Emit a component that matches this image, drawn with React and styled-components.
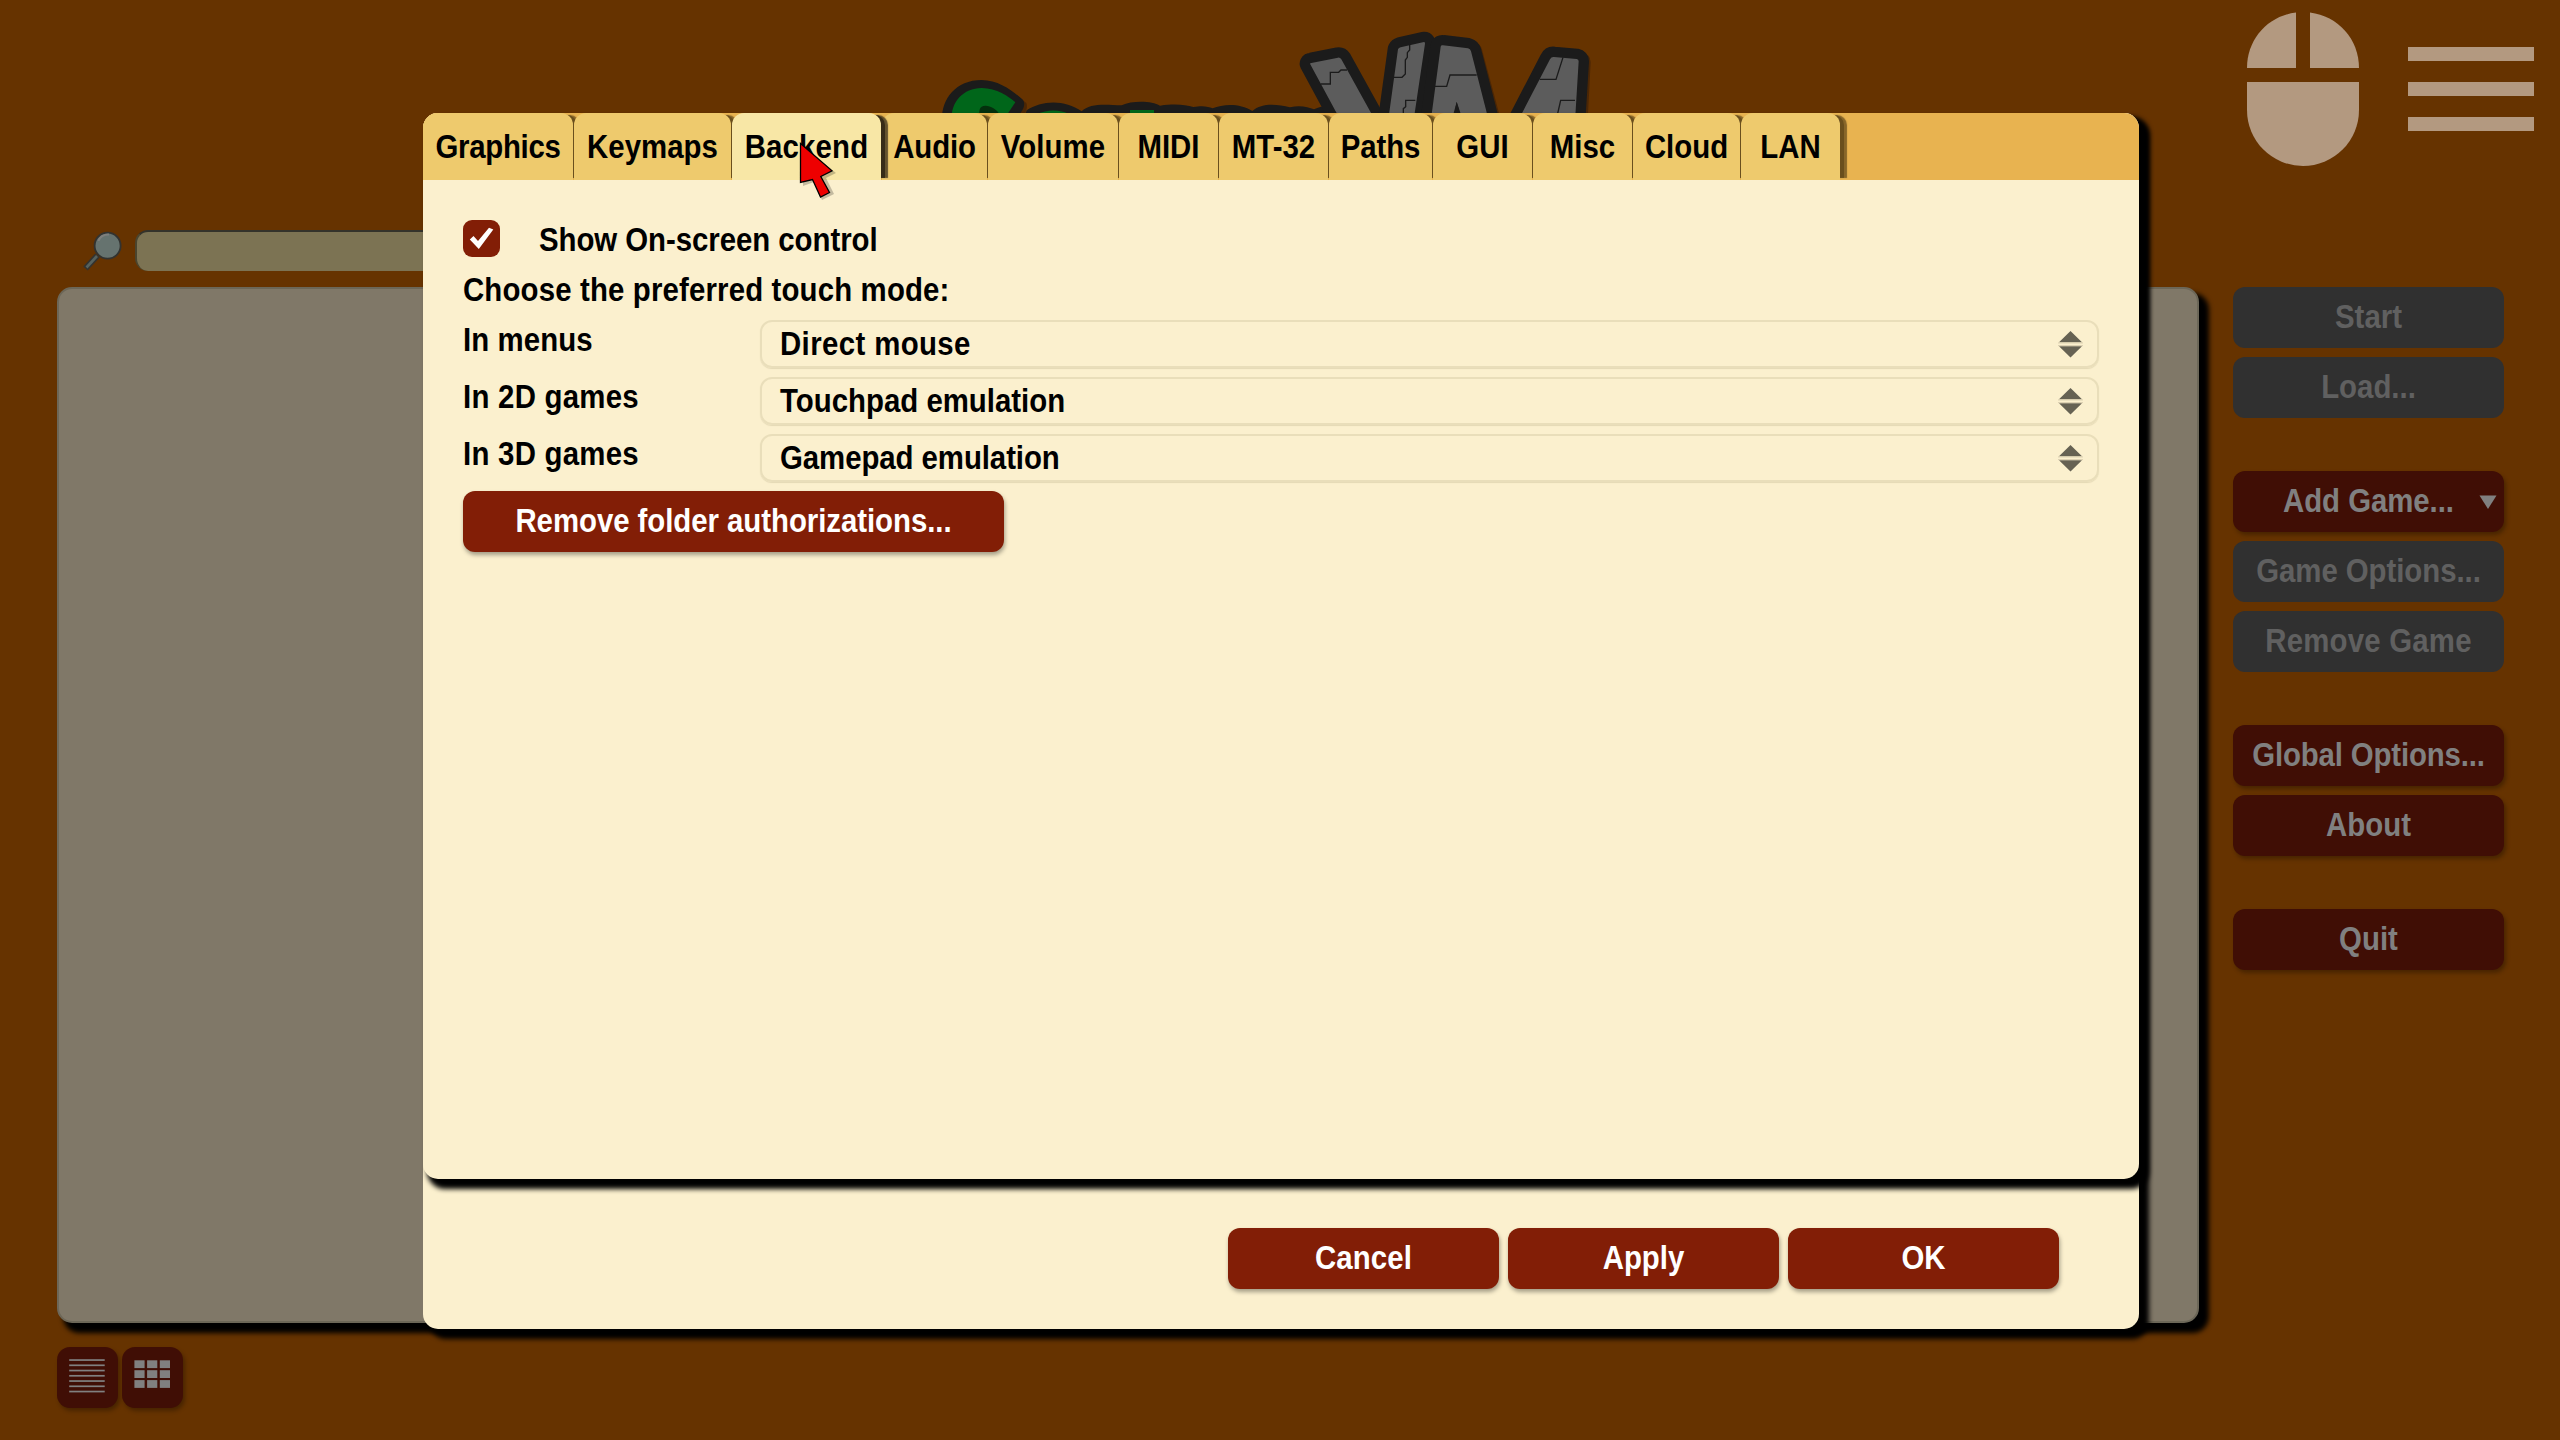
import React from "react";
import styled, { createGlobalStyle, css } from "styled-components";

const GlobalStyle = createGlobalStyle`
  * { box-sizing: border-box; }
  html, body { margin: 0; padding: 0; background: #663300; overflow: hidden; }
  body { font-family: "Liberation Sans", Arial, sans-serif; font-weight: 700; }
`;

const Screen = styled.div`
  position: relative;
  width: 2560px;
  height: 1440px;
  background: #663300;
  overflow: hidden;
`;

/* The interface face is a tall, slightly condensed grotesque. */
const Text = styled.span`
  display: inline-block;
  font-size: 29.4px;
  line-height: 40px;
  white-space: pre;
  letter-spacing: ${(p) => p.$track || 0}px;
  transform: translateY(0.7px) scaleY(1.137);
  transform-origin: 0 30.2px;
`;

/* ---------- launcher behind the dialog ---------- */

const Launcher = styled.div`
  display: flex;
  flex-direction: column;
  height: 100%;
  padding: 20px 56px 0 57px;
`;

const Header = styled.header`
  height: 210px;
  padding-left: 873px;
`;

const SearchRow = styled.div`
  display: flex;
  gap: 13px;
  height: 57px;
  padding-left: 25px;
`;

const SearchField = styled.div`
  width: 1200px;
  height: 41px;
  border: 2px solid #4a452f;
  border-top-color: #34332b;
  border-bottom: 0;
  border-radius: 13px;
  background: #7c7353;
`;

const Main = styled.div`
  display: flex;
  gap: 34px;
`;

const GameList = styled.div`
  width: 2142px;
  height: 1036px;
  border: 2px solid #6c6758;
  border-radius: 15px;
  background: #807868;
  box-shadow: 8px 8px 5px 1.5px #000;
`;

const Sidebar = styled.div`
  display: flex;
  flex-direction: column;
  gap: 53px;
`;

const SideGroup = styled.div`
  display: flex;
  flex-direction: column;
  gap: 9px;
`;

const variants = {
  disabled: css`background: #303030; color: #606060;`,
  dimmed: css`background: #400e05; color: #808080; box-shadow: 2px 3px 4px rgba(0, 0, 0, 0.3);`,
  primary: css`background: #821e06; color: #fff; box-shadow: 1px 3px 4px rgba(0, 0, 0, 0.35);`,
};

const Button = styled.button`
  position: relative;
  display: flex;
  align-items: center;
  justify-content: center;
  width: ${(p) => p.$width || 271}px;
  height: 61px;
  padding: 0 0 1px;
  border: 0;
  border-radius: 12px;
  font: inherit;
  ${(p) => variants[p.$variant]}
`;

const MenuArrow = styled.svg`
  position: absolute;
  right: 7px;
  top: 24px;
`;

const ViewSwitch = styled.div`
  display: flex;
  gap: 4px;
  margin-top: 24px;
`;

const ViewButton = styled.button`
  width: 61px;
  height: 61px;
  padding: 12px;
  border: 0;
  border-radius: 13px;
  background: #400e05;
  box-shadow: 2px 3px 4px rgba(0, 0, 0, 0.3);
  svg { display: block; }
`;

const TouchControls = styled.div`
  position: absolute;
  top: 12px;
  right: 26px;
  display: flex;
  gap: 49px;
`;

/* ---------- options dialog ---------- */

const Dialog = styled.section`
  position: absolute;
  isolation: isolate;
  left: 423px;
  top: 113px;
  width: 1716px;
  height: 1216px;
  border-radius: 15px;
  background: #fbf0ce;
  box-shadow: 8px 8px 5px 2px #000;
`;

const Pane = styled.div`
  height: 1066px;
  border-radius: 15px;
  background: #fbf0ce;
  box-shadow: 7px 7px 5px 3px #000;
`;

const TabBar = styled.nav`
  display: flex;
  gap: 1px;
  height: 67px;
  border-radius: 15px 15px 0 0;
  background: #e8b350;
  overflow: hidden;
`;

const Tab = styled.div`
  display: flex;
  align-items: center;
  justify-content: center;
  width: ${(p) => p.$width}px;
  border-radius: 12px 12px 0 0;
  color: #000;
  background: #eeca6d;
  box-shadow: 6px 0 0 -2px rgba(70, 50, 15, 0.45), 9px 0 1px -2px rgba(70, 50, 15, 0.6);
  ${(p) =>
    p.$active &&
    css`
      position: relative;
      z-index: 1;
      background: #f8e7a6;
      box-shadow: 6px 0 0 -2px rgba(40, 32, 18, 0.75), 9px 0 1px -2px rgba(40, 32, 18, 0.7);
    `}
`;

const TabContent = styled.div`
  display: flex;
  flex-direction: column;
  align-items: flex-start;
  padding: 40px 40px 0;
  color: #000;
`;

const CheckRow = styled.label`
  display: flex;
  align-items: flex-start;
  gap: 39px;
  height: 50px;
`;

const CheckBox = styled.span`
  display: flex;
  align-items: center;
  justify-content: center;
  width: 37px;
  height: 37px;
  border-radius: 9px;
  background: #821e06;
`;

const Caption = styled.div`
  height: 50px;
`;

const OptionRow = styled.div`
  display: flex;
  height: 57px;
`;

const OptionLabel = styled.div`
  width: 297px;
`;

const Select = styled.div`
  display: flex;
  align-items: center;
  justify-content: space-between;
  width: 1339px;
  height: 48px;
  padding: 0 14px 0 18px;
  border: 2px solid #e9deba;
  border-radius: 12px;
  box-shadow: 0 1px 1px #e4d9b5;
`;

const DialogActions = styled.div`
  display: flex;
  justify-content: flex-end;
  gap: 9px;
  padding: 49px 80px 0 0;
`;

const Cursor = styled.svg`
  position: absolute;
  z-index: 2;
  left: 798px;
  top: 138px;
`;

/* ---------- drawings ---------- */

const Logo = () => (
  <svg width="680" height="140" viewBox="930 20 680 140" fill="none">
    <g transform="translate(930 70) scale(0.33333)">
      <path d="M52 150C46 90 90 36 162 38C215 40 262 76 289 99C296 116 280 140 276 150Z" fill="#4b2604" />
      <path d="M36 150C34 90 75 30 155 30C208 30 252 66 277 88C286 98 284 112 272 128L268 150Z" fill="#1b1b1b" />
      <path d="M65 150C62 96 100 54 155 54C200 54 237 80 256 97L235 128L225 150Z" fill="#00661a" />
      <path d="M149 150C145 120 148 106 168 107C190 110 203 122 210 135Z" fill="#04300d" />
      <path d="M280 150L290 121C335 90 405 88 455 124C478 100 520 103 575 106C605 92 665 92 690 107C735 101 765 104 790 111C820 106 835 110 848 115C880 101 930 99 967 123C995 98 1040 102 1080 112C1112 105 1135 112 1152 118C1190 100 1235 106 1262 126L1280 150Z" fill="#1b1b1b" />
      <path d="M322 132C350 118 392 118 417 132Z" fill="#00661a" />
      <rect x="600" y="120" width="72" height="20" fill="#00661a" />
    </g>
    <g transform="translate(1270 20) scale(0.33333)" strokeLinejoin="round">
      <path d="M853 120L933 126L923 320H740Z M512 80L608 96L668 320H487Z" fill="#4b2604" stroke="#4b2604" strokeWidth="58" />
      <g fill="#5c5c5c" stroke="#1b1b1b" strokeWidth="62">
        <path d="M120 131Q121 129 124 129L204 113Q210 112 214 118L326 320H222Z" />
        <path d="M384 88Q386 84 392 82L462 66Q466 66 465 71L428 320H352Z" />
        <path d="M512 80Q513 75 519 76L594 85Q601 87 603 94L661 320H585L560 245L545 320H480Z" />
        <path d="M840 118Q844 110 852 111L920 117Q926 118 926 124L914 320H735Z" />
      </g>
      <g fill="#5c5c5c">
        <path d="M120 131Q121 129 124 129L204 113Q210 112 214 118L326 320H222Z" />
        <path d="M384 88Q386 84 392 82L462 66Q466 66 465 71L428 320H352Z" />
        <path d="M512 80Q513 75 519 76L594 85Q601 87 603 94L661 320H585L560 245L545 320H480Z" />
        <path d="M840 118Q844 110 852 111L920 117Q926 118 926 124L914 320H735Z" />
      </g>
      <path d="M560 246L548 290H573Z" fill="#1b1b1b" />
      <g stroke="#1b1b1b" strokeWidth="4" strokeLinejoin="miter">
        <path d="M152 192H181V157H206L213 150H231" />
        <path d="M372 172H396L406 162V120L412 112V98L419 90V74" />
        <path d="M436 241H407V260L400 266V290" />
        <path d="M494 199H530L540 165H620" />
        <path d="M809 178H858L879 112" />
        <path d="M915 241H872L862 285" />
      </g>
    </g>
  </svg>
);

const SearchIcon = () => (
  <svg width="40" height="41" viewBox="82 230 40 41">
    <path d="M97.5 255.5L85.500 268.500" stroke="#333330" strokeWidth="6" />
    <path d="M97 256L86.500 267.500" stroke="#56625e" strokeWidth="2.6" />
    <circle cx="107.600" cy="245.700" r="13" fill="#66736f" stroke="#333330" strokeWidth="1.800" />
    <path d="M98.500 241C100 236.500 104 234.500 109 234.500" stroke="#7f7f7c" strokeWidth="2" fill="none" />
  </svg>
);

const MouseIcon = () => (
  <svg width="112" height="154" viewBox="0 0 112 154" fill="#b39980">
    <path d="M49 0.500V56H0C0 27 21 4 49 0.500Z" />
    <path d="M63 0.500V56H112C112 27 91 4 63 0.500Z" />
    <path d="M0 70H112V98A56 56 0 0 1 0 98Z" />
  </svg>
);

const MenuIcon = () => (
  <svg width="126" height="154" viewBox="0 0 126 154" fill="#b39980">
    <rect y="35" width="126" height="14" />
    <rect y="70" width="126" height="14" />
    <rect y="105" width="126" height="14" />
  </svg>
);

const ListIcon = () => (
  <svg width="37" height="37" viewBox="0 0 37 37">
    {[0, 1, 2, 3, 4, 5, 6].map((i) => (
      <rect key={i} x="0.200" y={0.2 + i * 5.25} width="35.500" height="1.700" fill="#808080" />
    ))}
  </svg>
);

const GridIcon = () => (
  <svg width="37" height="37" viewBox="0 0 37 37">
    {[0, 1, 2].map((r) =>
      [0, 1, 2].map((c) => (
        <rect key={`${r}${c}`} x={0.4 + c * 12.7} y={1.3 + r * 9.9} width="10.200" height="7.800" fill="#808080" />
      ))
    )}
  </svg>
);

const CheckIcon = () => (
  <svg width="25" height="23" viewBox="0 0 25 23">
    <path d="M0.800 12.500L4.500 9L9 14L20 0.800L24.300 2.600L9.800 22Z" fill="#fff" />
  </svg>
);

const SpinIcon = () => (
  <svg width="25" height="27" viewBox="0 0 25 27">
    <path d="M12.500 0L24 11.300H1Z M12.500 26.500L24 15.200H1Z" fill="#666253" />
    <path d="M0 11.900H25M0 14.600H25" stroke="#d5cbab" strokeWidth="0.900" />
  </svg>
);

/* ---------- data ---------- */

const TABS = [
  ["Graphics", 150, -0.3],
  ["Keymaps", 157, 0.05],
  ["Backend", 149, 0.15],
  ["Audio", 105, -0.15],
  ["Volume", 130, 0.1],
  ["MIDI", 99, 0],
  ["MT-32", 109, 0],
  ["Paths", 103, -0.1],
  ["GUI", 99, 0],
  ["Misc", 99, 0],
  ["Cloud", 107, 0],
  ["LAN", 99, 0],
];

const SIDE = [
  [{ label: "Start", variant: "disabled" }, { label: "Load...", variant: "disabled" }],
  [
    { label: "Add Game...", variant: "dimmed", menu: true, track: -0.05 },
    { label: "Game Options...", variant: "disabled", track: -0.05 },
    { label: "Remove Game", variant: "disabled", track: 0.2 },
  ],
  [{ label: "Global Options...", variant: "dimmed", track: -0.15 }, { label: "About", variant: "dimmed" }],
  [{ label: "Quit", variant: "dimmed" }],
];

const TOUCH_MODES = [
  { label: "In menus", value: "Direct mouse", labelTrack: 0.1, valueTrack: 0.38 },
  { label: "In 2D games", value: "Touchpad emulation", labelTrack: 0.25, valueTrack: 0 },
  { label: "In 3D games", value: "Gamepad emulation", labelTrack: 0.25, valueTrack: -0.07 },
];

export default function App() {
  return (
    <Screen>
      <GlobalStyle />
      <Launcher>
        <Header><Logo /></Header>
        <SearchRow>
          <SearchIcon />
          <SearchField />
        </SearchRow>
        <Main>
          <GameList />
          <Sidebar>
            {SIDE.map((group, i) => (
              <SideGroup key={i}>
                {group.map(({ label, variant, menu, track }) => (
                  <Button key={label} $variant={variant}>
                    <Text $track={track}>{label}</Text>
                    {menu && (
                      <MenuArrow width="18" height="14" viewBox="0 0 18 14">
                        <path d="M0.500 0.500H17.500L9 14Z" fill="#808080" />
                      </MenuArrow>
                    )}
                  </Button>
                ))}
              </SideGroup>
            ))}
          </Sidebar>
        </Main>
        <ViewSwitch>
          <ViewButton><ListIcon /></ViewButton>
          <ViewButton><GridIcon /></ViewButton>
        </ViewSwitch>
      </Launcher>

      <TouchControls>
        <MouseIcon />
        <MenuIcon />
      </TouchControls>

      <Dialog>
        <Pane>
          <TabBar>
            {TABS.map(([label, width, track]) => (
              <Tab key={label} $width={width} $active={label === "Backend"}>
                <Text $track={track}>{label}</Text>
              </Tab>
            ))}
          </TabBar>
          <TabContent>
            <CheckRow>
              <CheckBox><CheckIcon /></CheckBox>
              <Text $track={-0.05}>Show On-screen control</Text>
            </CheckRow>
            <Caption><Text $track={0.15}>Choose the preferred touch mode:</Text></Caption>
            {TOUCH_MODES.map(({ label, value, labelTrack, valueTrack }) => (
              <OptionRow key={label}>
                <OptionLabel><Text $track={labelTrack}>{label}</Text></OptionLabel>
                <Select>
                  <Text $track={valueTrack}>{value}</Text>
                  <SpinIcon />
                </Select>
              </OptionRow>
            ))}
            <Button $variant="primary" $width={541}>
              <Text $track={-0.05}>Remove folder authorizations...</Text>
            </Button>
          </TabContent>
        </Pane>
        <DialogActions>
          <Button $variant="primary"><Text $track={0.1}>Cancel</Text></Button>
          <Button $variant="primary"><Text>Apply</Text></Button>
          <Button $variant="primary"><Text>OK</Text></Button>
        </DialogActions>
      </Dialog>

      <Cursor width="40" height="62" viewBox="798 138 40 62">
        <path d="M803 147V186L814 182L822 200L834 194L826 178L836 173Z" fill="rgba(0,0,0,0.22)" />
        <path d="M800.500 143.500V182.500L812.500 179.500L820.500 197L829.500 192.500L820.800 176.500L832 170.800Z" fill="#ee0000" stroke="#000" strokeWidth="1.300" />
      </Cursor>
    </Screen>
  );
}
